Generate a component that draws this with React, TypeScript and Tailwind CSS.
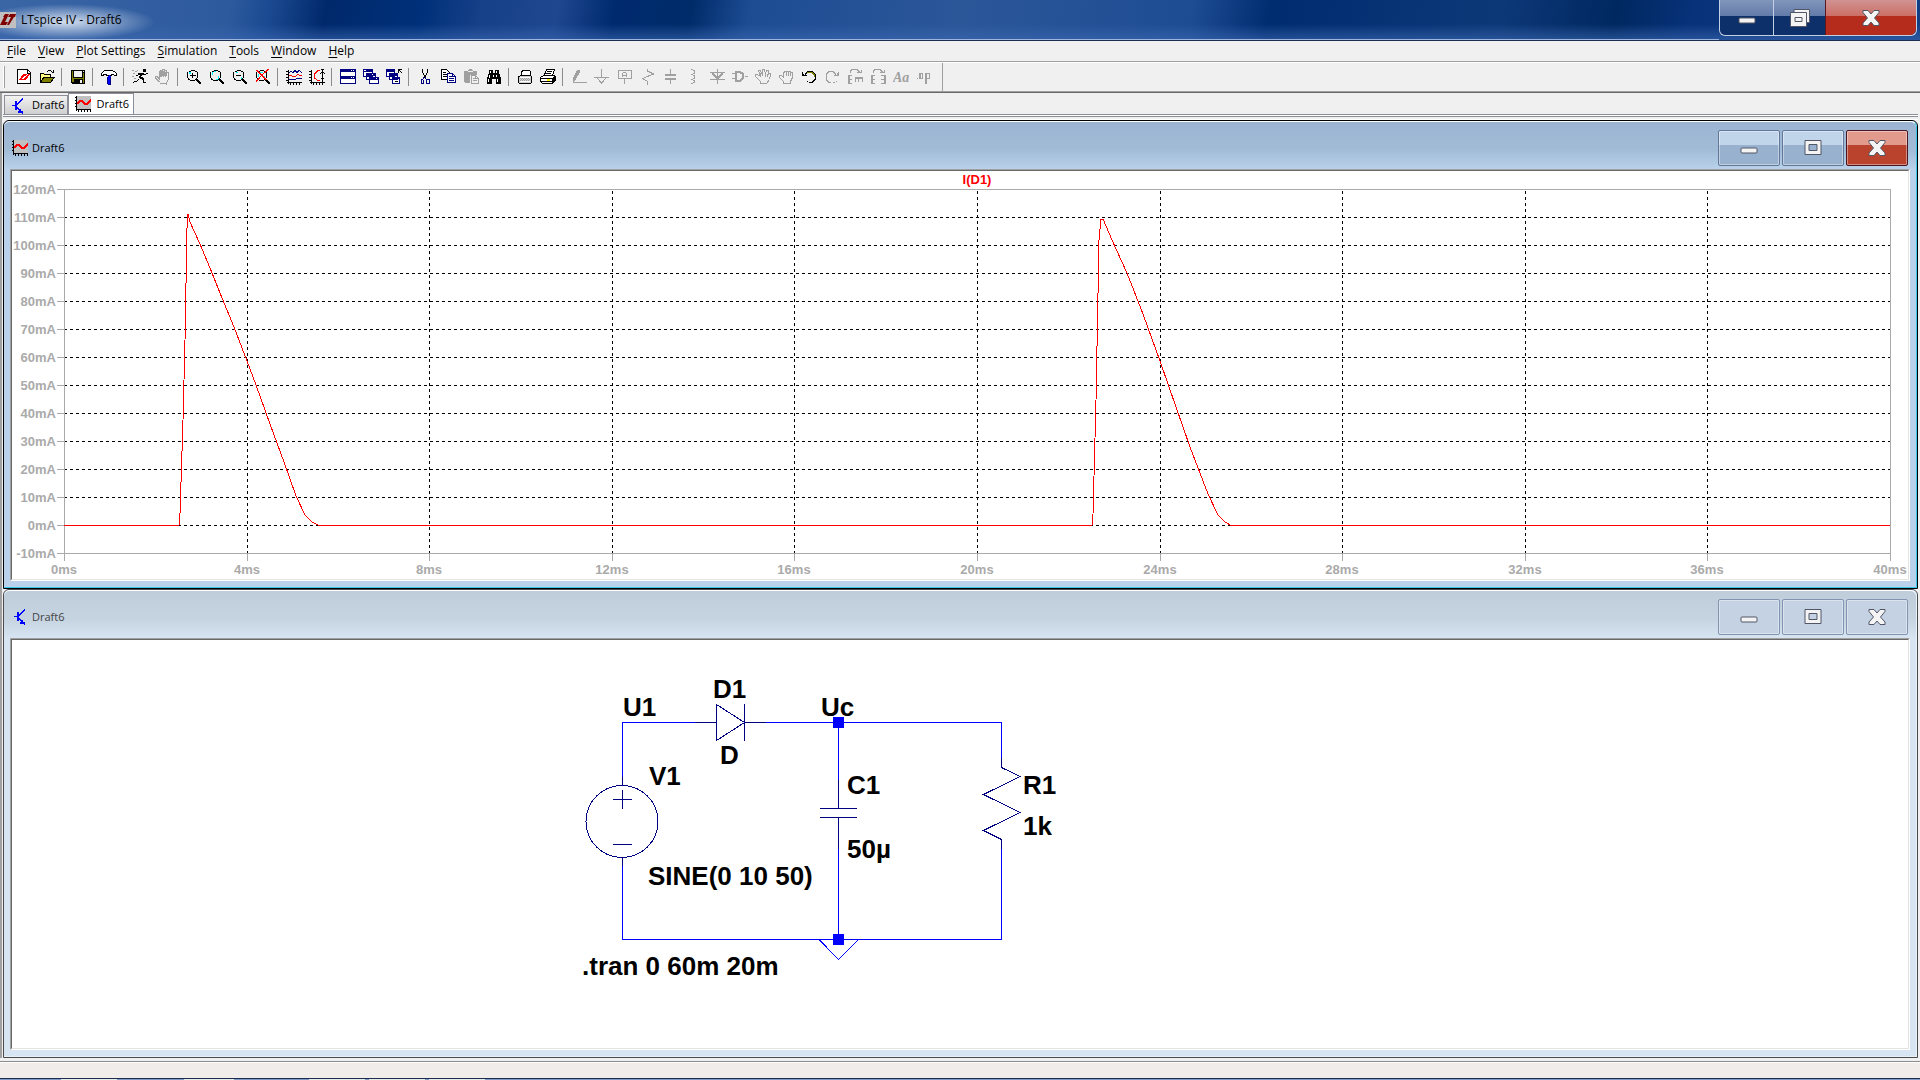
import { ReactNode } from "react";

const BLACK = "#000000";
const NAVY = "#000080";
const GRAY = "#a0a0a0";
const RED = "#ff0000";

function Icon({ children }: { children: ReactNode }) {
  return (
    <svg width="16" height="16" viewBox="0 0 16 16" fill="none" shapeRendering="crispEdges" className="shrink-0">
      {children}
    </svg>
  );
}

const loupe = (
  <>
    <path d="M4.5 1.5h4M2.5 2.5h2M8.5 2.5h2M1.5 4v4.500M11.500 4v4.500M2.500 8.500v2M10.500 8.500v2M4 11.500h5" stroke={BLACK} />
    <path d="M1.500 3v1M11.500 3v1M3 10.500h1M9 10.500h1" stroke={BLACK} />
    <path d="M10.500 10.500l4.500 4.500" stroke={BLACK} strokeWidth="2" />
  </>
);

const axes = (
  <path d="M2.500 1v14M0 2.500h2M0 5.500h2M0 8.500h2M0 11.500h2M1 13.500h15M4.500 14v2M7.500 14v2M10.500 14v2M13.500 14v2" stroke={BLACK} />
);

function PlotIcon() {
  return (
    <Icon>
      <rect x="2" y="0" width="14" height="14" fill="#c0c0c0" />
      <path d="M1.500 0v15M0 1.500h1M0 4.500h1M0 7.500h1M0 10.500h1M1 13.500h15M3.500 14v2M6.500 14v2M9.500 14v2M12.500 14v2M15.500 14v2" stroke={BLACK} />
      <path d="M2 8l3-3h2l3 3h2l4-4" stroke={RED} strokeWidth="2" />
    </Icon>
  );
}

function SchematicIcon() {
  return (
    <Icon>
      <path d="M2 7.500h3M7 6.500l6-6M7 9.500l6 6" stroke="#0000ff" />
      <path d="M6 3v9" stroke="#0000ff" strokeWidth="2" />
      <path d="M8 13h2v-2h1v2h2v3h-1v-1h-4z" fill="#0000ff" />
    </Icon>
  );
}

interface Tool {
  label: string;
  icon: ReactNode;
  disabled?: boolean;
}

const toolGroups: Tool[][] = [
  [
    {
      label: "New Schematic",
      icon: (
        <>
          <path d="M1.500 .500h10l3 3v11h-13z" fill="#ffffff" stroke={BLACK} />
          <path d="M11.500 1v3h3" stroke={BLACK} />
          <path d="M3 11l4-6h4l-1 2h-2l-2 3h1l-1 1zM8 10l2-3h1l1-2h2l-4 6h-4l1-1z" fill={RED} />
        </>
      ),
    },
    {
      label: "Open",
      icon: (
        <>
          <path d="M1 4h4l1 1h6v4h-7l-4 5z" fill="#ffff80" />
          <path d="M5 8h11l-4 6h-11z" fill="#808000" />
          <path d="M1.500 14v-9.500h3l1 1h6v2.500M1.500 13.500l3.500-5.500h10.500l-4 5.500z" stroke={BLACK} />
          <path d="M9 1.500h3M12 2.500h1M13 3.500h2M14.500 1v3M8 2.500h1" stroke={BLACK} />
        </>
      ),
    },
  ],
  [
    {
      label: "Save",
      icon: (
        <>
          <path d="M1 1h14v14h-13l-1-1z" fill={BLACK} />
          <path d="M2 2h1v11h-1zM13 4h1v10h-1zM4 9h9v1h-9zM2 9h2v4h-2z" fill="#808000" />
          <path d="M4 2h8v6h-8zM13 2h1v1h-1zM10 11h2v3h-2z" fill="#f0f0f0" />
        </>
      ),
    },
  ],
  [
    {
      label: "Control Panel",
      icon: (
        <>
          <path d="M.500 4.500l3-3h7l3 1 2 2v2h-2l-1-1h-2v1h-5v-1h-2l-2 1h-1z" fill="#ffffff" stroke={BLACK} />
          <path d="M7 7h3v8h-3zM8 6h1v1h-1z" fill="#0000ff" />
          <path d="M6.500 8v7M9.500 8v7M7 15.500h3" stroke={NAVY} />
        </>
      ),
    },
  ],
  [
    {
      label: "Run",
      icon: (
        <>
          <path d="M11 0h3v3h-3z" fill={BLACK} />
          <path d="M7 4h5v2h-2l-1 3h-2l1-3h-1zM7 8h3l2 2v3h-1v-2l-3-1z" fill={BLACK} />
          <path d="M12 5.500h2M14 4.500h2M6.500 4v1.500M4 6.500h1.500M7 10.500h-1M6 11.500h-1M5 12.500h-3M1.500 13v1M11 13.500h3" stroke={BLACK} />
          <path d="M0 1.500h2M3 2.500h2M1 4.500h2M0 7.500h2M5 1.500h1M2 9.500h2" stroke={GRAY} />
        </>
      ),
    },
    {
      label: "Halt",
      disabled: true,
      icon: (
        <path
          d="M5 14.500h7M4.500 13l-4-4v-1.500h1.500l2 2v-7h1.500v5-6.500h2v6-7h2v7-6h2v6-4h2v7l-2 4v2M6.500 8v-6M8.500 8v-6M10.500 8v-5"
          stroke={GRAY}
        />
      ),
    },
  ],
  [
    {
      label: "Zoom In",
      icon: (
        <>
          <path d="M3 3h2v2h-2z" fill="#00ffff" />
          {loupe}
          <path d="M4 6.500h6M6.500 4v5" stroke={BLACK} />
        </>
      ),
    },
    {
      label: "Pan",
      icon: (
        <>
          <path d="M4 2.500h3M3.500 3v3M9.500 7v3M7 10.500h2" stroke="#00ffff" />
          {loupe}
        </>
      ),
    },
    {
      label: "Zoom Out",
      icon: (
        <>
          <path d="M4 3.500h2M9.500 8v2" stroke="#00ffff" />
          {loupe}
          <path d="M4 6.500h5" stroke={BLACK} />
        </>
      ),
    },
    {
      label: "Zoom Full Extents",
      icon: (
        <>
          <path d="M5 3.500h3M9.500 7v3M3.500 5v3" stroke="#00ffff" />
          {loupe}
          <path d="M1 1.500h2M2 2.500h2M3 3.500h2M4 4.500h2M5 5.500h2M6 6.500h2M7 7.500h2M8 8.500h2M9 9.500h2M10 10.500h2M12 0.500h2M11 1.500h2M10 2.500h2M9 3.500h2M8 4.500h1M7 5.500h1M5 7.500h1M4 8.500h1M3 9.500h2M2 10.500h2M1 11.500h2M1 12.500h1" stroke={RED} />
        </>
      ),
    },
  ],
  [
    {
      label: "Autorange",
      icon: (
        <>
          {axes}
          <path d="M3 4l2-2 2 2 2-3 2 3 2-3 3 3M3 10.500h6l2-1h5" stroke={NAVY} />
          <path d="M3 6.500h3M6 7.500h4M10 6.500h1M11 5.500h2M13 6.500h3" stroke={RED} />
        </>
      ),
    },
    {
      label: "Pick Visible Traces",
      icon: (
        <>
          {axes}
          <path d="M11 1.500h-2l-4 4v3l4 3h2" stroke={RED} />
          <path d="M13.500 1v12M12 3.500h1M14 3.500h1M11 4.500h1M15 4.500h1M12 9.500h1M14 9.500h1M12 .500h3" stroke={BLACK} />
        </>
      ),
    },
  ],
  [
    {
      label: "Tile Windows",
      icon: (
        <>
          <path d="M.500 .500h15v14h-15z" fill="#ffffff" stroke={NAVY} />
          <path d="M0 0h16v3h-16zM0 7h16v3h-16z" fill={NAVY} />
          <path d="M11 1.500h1M13 1.500h1M11 8.500h1M13 8.500h1" stroke="#ffffff" />
        </>
      ),
    },
    {
      label: "Cascade Windows",
      icon: (
        <>
          <path d="M.500 .500h9v7h-9zM3.500 4.500h9v6h-9zM6.500 8.500h9v6h-9z" fill="#ffffff" stroke={NAVY} />
          <path d="M0 0h10v3h-10zM3 4h10v3h-10zM6 8h10v3h-10z" fill={NAVY} />
          <path d="M1 1.500h2M9 5.500h1M13 9.500h1" stroke="#ffffff" />
        </>
      ),
    },
    {
      label: "Close All Windows",
      icon: (
        <>
          <path d="M.500 .500h8v7h-8zM3.500 4.500h8v6h-8zM6.500 8.500h7v6h-7z" fill="#ffffff" stroke={NAVY} />
          <path d="M0 0h9v3h-9zM3 4h9v3h-9zM6 8h8v2h-8z" fill={NAVY} />
          <path d="M12.500 4v-3.500h3.500M13 1l3 3M9 12.500h3" stroke={BLACK} />
        </>
      ),
    },
  ],
  [
    {
      label: "Cut",
      icon: (
        <>
          <path d="M5.500 0v3l2 4 1 2M10.500 0v3l-2 4-1 2" stroke={BLACK} />
          <path d="M7 8l-1 2h-2v4h2v-3M8 8l1 2h3v4h-3v-4" stroke={NAVY} />
        </>
      ),
    },
    {
      label: "Copy",
      icon: (
        <>
          <path d="M1.500 .500h5l3 3v7h-8z" fill="#ffffff" stroke={BLACK} />
          <path d="M3 3.500h3M3 5.500h4M3 7.500h4" stroke={BLACK} />
          <path d="M7.500 4.500h5l3 3v6h-8z" fill="#ffffff" stroke={NAVY} />
          <path d="M9 7.500h3M9 9.500h5M9 11.500h5M12.500 5v2.500h3" stroke={NAVY} />
        </>
      ),
    },
    {
      label: "Paste",
      disabled: true,
      icon: (
        <>
          <path d="M1 2h4l1-2h3l1 2h4v4h-7v8h-5l-1-1z" fill={GRAY} />
          <path d="M5 2.500h5" stroke="#f0f0f0" />
          <path d="M8.500 6.500h4l3 3v5h-7z" fill="#f0f0f0" stroke={GRAY} />
          <path d="M10 9.500h2M10 11.500h4M12.500 7v2.500h3" stroke={GRAY} />
        </>
      ),
    },
    {
      label: "Find",
      icon: (
        <>
          <path d="M3 1h4v3h2v-3h4v3l2 5v6h-5v-5h-4v5h-5v-6l2-5z" fill={BLACK} />
          <path d="M4.500 2v2M3.500 6v3M2.500 10v3M10.500 2v2M10.500 6v2M11.500 10v3M7.500 6v2" stroke="#ffffff" />
        </>
      ),
    },
  ],
  [
    {
      label: "Print Setup",
      icon: (
        <>
          <path d="M1.500 7.500h1l1-1h10l1 1v6l-1 1h-11l-1-1z" fill="#d0d0d0" stroke={BLACK} />
          <path d="M4.500 6v-3l2-2h6l1 2v3z" fill="#ffffff" stroke={BLACK} />
          <path d="M3 8.500h10M3 12.500h10" stroke="#ffffff" />
          <path d="M3 9.500h10M3 11.500h10" stroke={GRAY} strokeDasharray="1 1" />
          <path d="M4 10.500h10" stroke={GRAY} strokeDasharray="1 1" />
        </>
      ),
    },
    {
      label: "Print",
      icon: (
        <>
          <path d="M.500 8.500l3-2h11l1 1v4l-3 3h-10l-2-2z" fill="#ffffff" stroke={BLACK} />
          <path d="M4.500 6l2-5.500h8l-2 6z" fill="#ffffff" stroke={BLACK} />
          <path d="M7 2.500h5M6 4.500h5M1 9.500h11M1 12.500h11M12.500 9v5M14.500 7v5M13.500 8v5" stroke={BLACK} />
          <path d="M7 10.500h3" stroke="#ffff00" strokeWidth="2" />
        </>
      ),
    },
  ],
  [
    {
      label: "Wire",
      disabled: true,
      icon: (
        <>
          <path d="M6 1h3v2l-4 7-3 3v-4z" fill={GRAY} />
          <path d="M2 13.500h14M2.500 11v3" stroke={GRAY} />
        </>
      ),
    },
    {
      label: "Ground",
      disabled: true,
      icon: <path d="M7.500 0v8M0 8.500h15M3 9l4.500 5 4.500-5" stroke={GRAY} />,
    },
    {
      label: "Label Net",
      disabled: true,
      icon: (
        <>
          <path d="M1.500 1.500h13v8h-13zM7.500 10v5" stroke={GRAY} />
          <path d="M5.500 8v-3l1-1.500h2l1 1.500v3M6 6.500h4" stroke={GRAY} />
        </>
      ),
    },
    {
      label: "Resistor",
      disabled: true,
      icon: <path d="M7.500 0v2l6 3-11 4.500 5 3v3" stroke={GRAY} />,
    },
    {
      label: "Capacitor",
      disabled: true,
      icon: (
        <>
          <path d="M7.500 0v5M7.500 10v5" stroke={GRAY} />
          <path d="M2 6h11M2 10h11" stroke={GRAY} strokeWidth="2" />
        </>
      ),
    },
    {
      label: "Inductor",
      disabled: true,
      icon: (
        <path d="M5 .500h2M7 1.500h2M8.500 2v2M7 4.500h2M5 5.500h2M7 6.500h2M8.500 7v2M7 9.500h2M5 10.500h2M7 11.500h2M8.500 12v1M7 13.500h2M5 14.500h2" stroke={GRAY} />
      ),
    },
    {
      label: "Diode",
      disabled: true,
      icon: (
        <>
          <path d="M8.500 0v15M1 3.500h15M1 10.500h15" stroke={GRAY} />
          <path d="M3.500 4l5 6 5-6" stroke={GRAY} strokeWidth="2" />
        </>
      ),
    },
    {
      label: "Component",
      disabled: true,
      icon: (
        <>
          <path d="M0 4.500h4M0 9.500h4M13 7.500h3" stroke={GRAY} />
          <path d="M4 3h4l3 2v4l-3 3h-4z" stroke={GRAY} strokeWidth="2" />
        </>
      ),
    },
    {
      label: "Move",
      disabled: true,
      icon: (
        <path
          d="M5.500 14.500h6l3-4 1-4v-2h-2l-1 3 1-5v-1.500h-2l-1 5-1-5.500h-2v6l-2-5h-2l2 6-3-2h-2v2l5 5zM10 8v-3M6 7l-1-3M12 8l1-3"
          stroke={GRAY}
        />
      ),
    },
    {
      label: "Drag",
      disabled: true,
      icon: <path d="M5.500 14.500v-2l-4-4v-2h2l2 2v-4l1-2h1.500v4-4h2v4-4h2v4-3h2v6l-2 4v1z" stroke={GRAY} />,
    },
    {
      label: "Undo",
      icon: (
        <>
          <path d="M4 5.500l3-3h4l3 3v5l-3 3h-2" stroke={BLACK} />
          <path d="M6 3.500h5l2 2v2" stroke="#808000" />
          <path d="M1 3h1v3h4v1h-5z" fill={BLACK} />
          <path d="M2 5l2 2M6 12.500h1M8 13.500h1" stroke={BLACK} />
        </>
      ),
    },
    {
      label: "Redo",
      disabled: true,
      icon: (
        <>
          <path d="M12 5.500l-3-3h-4l-3 3v5l3 3h2M9 13.500h2M12 12.500h1" stroke={GRAY} />
          <path d="M14 3h1v4h-5v-1h3z" fill={GRAY} />
        </>
      ),
    },
    {
      label: "Rotate",
      disabled: true,
      icon: (
        <>
          <path d="M3 3.500v-1l2-2h5l3 3M10 3.500h4v-3M1 6.500h4M1 10.500h4M1 14.500h4M8 9.500h8M8.500 9v4M11.500 9v4M15.500 9v4" stroke={GRAY} />
          <path d="M2 6v9" stroke={GRAY} strokeWidth="2" />
          <path d="M8 9h8" stroke={GRAY} strokeWidth="2" />
        </>
      ),
    },
    {
      label: "Mirror",
      disabled: true,
      icon: (
        <>
          <path d="M3 3.500v-1l2-2h5l3 3M10 3.500h4v-3M1 6.500h4M1 10.500h4M1 14.500h4M11 6.500h5M11 10.500h5M11 14.500h5" stroke={GRAY} />
          <path d="M2 6v9M15 6v9" stroke={GRAY} strokeWidth="2" />
        </>
      ),
    },
    {
      label: "Text",
      disabled: true,
      icon: (
        <text x="0" y="13" fill={GRAY} fontSize="14" fontStyle="italic" fontWeight="bold" fontFamily="Liberation Serif, serif">
          Aa
        </text>
      ),
    },
    {
      label: "SPICE Directive",
      disabled: true,
      icon: (
        <>
          <path d="M1 9h1v1h-1z" fill={GRAY} />
          <path d="M3.500 4.500h3v5h-3zM9.500 15v-10.500h4v5h-4" stroke={GRAY} />
          <path d="M4 4v6M10 4v11" stroke={GRAY} strokeWidth="2" />
        </>
      ),
    },
  ],
];

const menuItems = ["File", "View", "Plot Settings", "Simulation", "Tools", "Window", "Help"];

function MinimizeGlyph() {
  return (
    <svg width="18" height="16" viewBox="0 0 18 16">
      <rect x="1" y="8" width="16" height="5" rx="1" fill="#f4f4f4" stroke="#535666" />
    </svg>
  );
}

function MaximizeGlyph() {
  return (
    <svg width="18" height="16" viewBox="0 0 18 16">
      <path d="M1 .500h16v14h-16zM5 4.500v6h8v-6z" fill="#f4f4f4" stroke="#535666" fillRule="evenodd" />
    </svg>
  );
}

function RestoreGlyph() {
  return (
    <svg width="20" height="18" viewBox="0 0 20 18">
      <path d="M4 .500h15.500v13h-15.500z" fill="#f4f4f4" stroke="#535666" />
      <path d="M.500 3.500h16v14h-16zM5 8.500v4h7v-4z" fill="#f4f4f4" stroke="#535666" fillRule="evenodd" />
    </svg>
  );
}

function CloseGlyph() {
  return (
    <svg width="18" height="16" viewBox="0 0 18 16">
      <path
        d="M1 .500h5l3 3.500 3-3.500h5v2l-4.500 5.500 4.500 5v2.500h-5l-3-3.500-3 3.500h-5v-2.500l4.500-5-4.500-5.500z"
        fill="#f4f4f4"
        stroke="#535666"
        strokeLinejoin="round"
      />
    </svg>
  );
}

interface ChildWindowProps {
  title: string;
  icon: ReactNode;
  active?: boolean;
  children: ReactNode;
}

function ChildWindow({ title, icon, active, children }: ChildWindowProps) {
  const button = active
    ? "border-[#62789b] bg-linear-to-b from-[#c0d4ea] from-40% to-[#98b1ce] to-40%"
    : "border-[#8394b0] bg-[#c4d2e3]";
  const close = active
    ? "border-[#4a1520] bg-linear-to-b from-[#e29a8d] from-40% to-[#b9432d] to-40%"
    : "border-[#8394b0] bg-[#c4d2e3]";
  return (
    <section
      className={
        "flex min-h-0 flex-1 flex-col rounded-t-md border " +
        (active ? "border-black bg-[#b9d1ea]" : "border-[#4a4a4a] bg-[#d7e4f2]")
      }
    >
      <div
        className={
          "flex min-h-0 flex-1 flex-col rounded-t-md border-t border-white px-[6px] pb-[6px] " +
          (active ? "border-r border-b border-r-[#34c9e8] border-b-[#34c9e8]" : "border-r border-b border-r-[#e8f0f8] border-b-[#e8f0f8]")
        }
      >
        <header
          className={
            "-mx-[6px] flex h-[47px] shrink-0 items-center rounded-t-md pt-[5px] pl-2 pr-[8px] " +
            (active
              ? "bg-linear-to-b from-[#9ab4d1] via-[#a2bcd8] via-60% to-[#b9d1ea]"
              : "bg-linear-to-b from-[#bfcddb] via-[#c6d4e2] via-60% to-[#d7e4f2]")
          }
        >
          {icon}
          <h2 className={"ml-1 flex-1 text-[11px] " + (active ? "text-black" : "text-[#444444]")}>{title}</h2>
          <div className="flex gap-[2px]">
            <button aria-label="Minimize" className={"flex h-9 w-[62px] items-center justify-center rounded-xs border inset-ring inset-ring-white/40 " + button}>
              <MinimizeGlyph />
            </button>
            <button aria-label="Maximize" className={"flex h-9 w-[62px] items-center justify-center rounded-xs border inset-ring inset-ring-white/40 " + button}>
              <MaximizeGlyph />
            </button>
            <button aria-label="Close" className={"flex h-9 w-[62px] items-center justify-center rounded-xs border inset-ring inset-ring-white/40 " + close}>
              <CloseGlyph />
            </button>
          </div>
        </header>
        <div className="flex min-h-0 flex-1 flex-col border border-t-[#a0a0a0] border-r-white border-b-white border-l-[#a0a0a0]">
          <div className="min-h-0 flex-1 border border-t-[#696969] border-r-[#e3e3e3] border-b-[#e3e3e3] border-l-[#696969] bg-white">
            {children}
          </div>
        </div>
      </div>
    </section>
  );
}

const LEFT = 64;
const RIGHT = 1890;
const TOP = 189;
const BOTTOM = 553;
const amps = Array.from({ length: 14 }, (_, i) => 120 - i * 10);
const times = Array.from({ length: 11 }, (_, i) => i * 4);

const timeX = (ms: number) => Math.round(LEFT + ((RIGHT - LEFT) * ms) / 40);
const ampY = (mA: number) => TOP + ((120 - mA) * (BOTTOM - TOP)) / 130;

function Waveform() {
  return (
    <svg viewBox="12 171 1896 408" className="block h-full w-full" role="img" aria-label="I(D1)">
      <g shapeRendering="crispEdges" fill="none">
        {amps.slice(1, -1).map((mA) => (
          <path key={mA} d={`M${LEFT} ${ampY(mA) + 0.5}H${RIGHT}`} stroke="#000000" strokeDasharray="3 3" />
        ))}
        {times.slice(1, -1).map((ms) => (
          <path key={ms} d={`M${timeX(ms) + 0.5} ${TOP + 2}V${BOTTOM}`} stroke="#000000" strokeDasharray="3 3" />
        ))}
        <path d={`M${LEFT + 0.5} ${TOP + 0.5}H${RIGHT + 0.5}V${BOTTOM + 0.5}H${LEFT + 0.5}z`} stroke="#aaaaaa" />
        {amps.map((mA) => (
          <path key={mA} d={`M57 ${ampY(mA) + 0.5}h7`} stroke="#aaaaaa" />
        ))}
        {times.map((ms) => (
          <path key={ms} d={`M${timeX(ms) + 0.5} ${BOTTOM}v8`} stroke="#aaaaaa" />
        ))}
        <path
          d="M64 525.500H179L180 514L183 420L185 340L187 228L188 214L190 222L200 244L210 268L220 293L234 327L247 361L256 385L270 424L284 462L296 496L305 515L312 522L319 525.500H1092L1093 514L1096 400L1099 240L1101 219L1103 219L1112 240L1127 273L1143 314L1160 361L1176 407L1190 447L1208 494L1218 515L1225 522L1231 525.500H1890"
          stroke={RED}
        />
      </g>
      <g fill="#aaaaaa" fontFamily="Liberation Sans, Arial, sans-serif" fontSize="13" fontWeight="bold">
        {amps.map((mA) => (
          <text key={mA} x="56" y={ampY(mA) + 5} textAnchor="end">
            {mA}mA
          </text>
        ))}
        {times.map((ms) => (
          <text key={ms} x={timeX(ms)} y="574" textAnchor="middle">
            {ms}ms
          </text>
        ))}
        <text x="977" y="184" textAnchor="middle" fill={RED}>
          I(D1)
        </text>
      </g>
    </svg>
  );
}

const schematicLabels = [
  { text: "U1", x: 623, y: 716 },
  { text: "D1", x: 713, y: 698 },
  { text: "D", x: 720, y: 764 },
  { text: "Uc", x: 821, y: 716 },
  { text: "V1", x: 649, y: 785 },
  { text: "SINE(0 10 50)", x: 648, y: 885 },
  { text: "C1", x: 847, y: 794 },
  { text: "50µ", x: 847, y: 858 },
  { text: "R1", x: 1023, y: 794 },
  { text: "1k", x: 1023, y: 835 },
  { text: ".tran 0 60m 20m", x: 582, y: 975 },
];

function Schematic() {
  return (
    <svg viewBox="12 640 1896 408" className="block h-full w-full" role="img" aria-label="Rectifier schematic">
      <g shapeRendering="crispEdges" fill="none">
        {/* wires */}
        <path
          d="M695 722.500H622.500V777M622.500 866V939.500H1001.500V848M1001.500 758V722.500H766M838.500 722V780M838.500 849V939"
          stroke="#0000ff"
        />
        <path d="M819 939.500l19.500 20 20-20" stroke="#0000ff" />
        {/* parts */}
        <g stroke={NAVY}>
          <circle cx="622" cy="821.500" r="36" />
          <path d="M622.500 777v8M622.500 857v9M613 799.500h19M622.500 790v19M613 844.500h19" />
          <path d="M695 722.500h21M716.500 704v37M716.500 704.500l28 18-28 18M744.500 704v37M744 722.500h22" />
          <path d="M838.500 780v28M820 808.500h37M820 817.500h37M838.500 817v32" />
          <path d="M1001.500 758v9.500l18.500 9-36.500 18 36.500 18-36.500 18 18 9v9" />
        </g>
      </g>
      <rect x="833" y="717" width="11" height="11" fill="#0000ff" />
      <rect x="833" y="934" width="11" height="11" fill="#0000ff" />
      <g fill="#000000" fontFamily="Liberation Sans, Arial, sans-serif" fontSize="26" fontWeight="bold">
        {schematicLabels.map((l) => (
          <text key={l.text} x={l.x} y={l.y}>
            {l.text}
          </text>
        ))}
      </g>
    </svg>
  );
}

export default function App() {
  return (
    <div className="flex h-screen min-h-[600px] flex-col bg-[#f0f0f0] font-['Open_Sans',sans-serif] text-xs text-black">
      {/* Title bar */}
      <header className="flex h-[41px] shrink-0 items-start border-b border-[#1b2c4e] bg-[radial-gradient(ellipse_90px_18px_at_65px_22px,#d3deee,transparent),linear-gradient(to_bottom,transparent_60%,#3b68b099),linear-gradient(100deg,#3a66a6,#2d5a9d_12%,#1c4a92_14%,#00296b_17%,#00307a_22%,#164088_25%,#1e4790_29%,#002a6e_32%,#002c6a_36%,#1e4c93_39%,#2b5799_50%,#1e4c93_62%,#002c70_66%,#0d3878_78%,#002860_84%,#08327a_88%,#123e86)]">
        <div className="flex h-10 flex-1 items-center border-b border-[#9cb4e0]">
          <svg width="16" height="16" viewBox="0 0 16 16" className="bg-[#c0c0c0]">
            <path d="M0 13l4-8h-1l2-3h4l-1 2-3 6h3l-2 3zM7 13l4-8h-3l2-3h6l-1 3h-1l-5 8z" fill="#800000" />
          </svg>
          <h1 className="ml-[5px]">LTspice IV - Draft6</h1>
        </div>
        <div className="mr-[3px] flex h-9 rounded-b-md border border-t-0 border-[#c3cfe2]">
          <button aria-label="Minimize" className="flex w-[54px] items-center justify-center rounded-bl-md border-r border-[#c3cfe2] bg-linear-to-b from-[#8296bb] via-[#637ba9] via-45% to-[#0d2f6a] to-45%">
            <MinimizeGlyph />
          </button>
          <button aria-label="Restore" className="flex w-[51px] items-center justify-center bg-linear-to-b from-[#8296bb] via-[#637ba9] via-45% to-[#0d2f6a] to-45%">
            <RestoreGlyph />
          </button>
          <button aria-label="Close" className="flex w-[91px] items-center justify-center rounded-br-md border-l border-[#5b1820] bg-linear-to-b from-[#cf9292] via-[#cc6f66] via-45% to-[#b52c1c] to-45%">
            <CloseGlyph />
          </button>
        </div>
      </header>

      {/* Menu bar */}
      <nav className="flex h-[21px] shrink-0 items-center gap-3 border-b border-[#a0a0a0] pl-[7px]">
        {menuItems.map((item) => (
          <button key={item}>
            <span className="underline underline-offset-2">{item[0]}</span>
            {item.slice(1)}
          </button>
        ))}
      </nav>

      {/* Toolbar */}
      <div className="flex h-[31px] shrink-0 border-t border-b border-t-white border-b-[#696969] shadow-[inset_0_-1px_0_#a0a0a0]">
        <div className="flex items-center border-r border-[#a0a0a0] pb-[2px] pl-[3px] pr-[6px]">
          <span className="mr-[8px] h-[22px] w-[2px] border-r border-[#a0a0a0] bg-white" />
          {toolGroups.map((group, i) => (
            <div key={i} className="flex items-center">
              {i > 0 && <span className="ml-[2px] mr-[5px] h-[18px] w-px bg-[#8c8c8c]" />}
              {group.map((tool) => (
                <button key={tool.label} aria-label={tool.label} disabled={tool.disabled} className="w-[23px] pl-[3px]">
                  <Icon>{tool.icon}</Icon>
                </button>
              ))}
            </div>
          ))}
        </div>
      </div>

      {/* Document area */}
      <main className="flex min-h-0 flex-1 flex-col border-l-2 border-[#a0a0a0] pl-px pr-[2px]">
        <div role="tablist" className="flex h-[22px] shrink-0 items-end border-b border-[#8c8e99] text-[11px]">
          <button
            role="tab"
            aria-selected="false"
            className="ml-px flex h-[19px] items-center gap-[6px] border border-b-0 border-[#8c8e99] bg-linear-to-b from-[#f2f2f2] to-[#cfcfcf] pt-px pl-[5px] pr-[2px]"
          >
            <SchematicIcon />
            Draft6
          </button>
          <button role="tab" aria-selected="true" className="flex h-[21px] items-center gap-[6px] border border-b-0 border-[#8c8e99] bg-white pl-[6px] pr-1">
            <PlotIcon />
            Draft6
          </button>
        </div>
        <div className="h-[5px] shrink-0 border-t border-b border-t-white border-b-white">
          <div className="border-t border-[#8c8e99]" />
        </div>
        <ChildWindow title="Draft6" icon={<PlotIcon />} active>
          <Waveform />
        </ChildWindow>
        <ChildWindow title="Draft6" icon={<SchematicIcon />}>
          <Schematic />
        </ChildWindow>
      </main>

      {/* Status bar */}
      <footer className="mt-[3px] flex h-[19px] shrink-0 flex-col border-t border-[#8c8c8c]">
        <div className="flex-1 border-t border-white bg-[#f0edeb]" />
        <div className="h-px bg-[#1b2c4e]" />
        <div className="flex h-px bg-[#7f9cc8]">
          <span className="ml-[61px] w-14 bg-[#e6ece8]" />
          <span className="ml-[67px] w-[50px] bg-[#e6ece8]" />
          <span className="ml-[75px] w-14 bg-[#e6ece8]" />
          <span className="ml-1 w-14 bg-[#e6ece8]" />
          <span className="ml-1 w-14 bg-[#e6ece8]" />
        </div>
      </footer>
    </div>
  );
}
